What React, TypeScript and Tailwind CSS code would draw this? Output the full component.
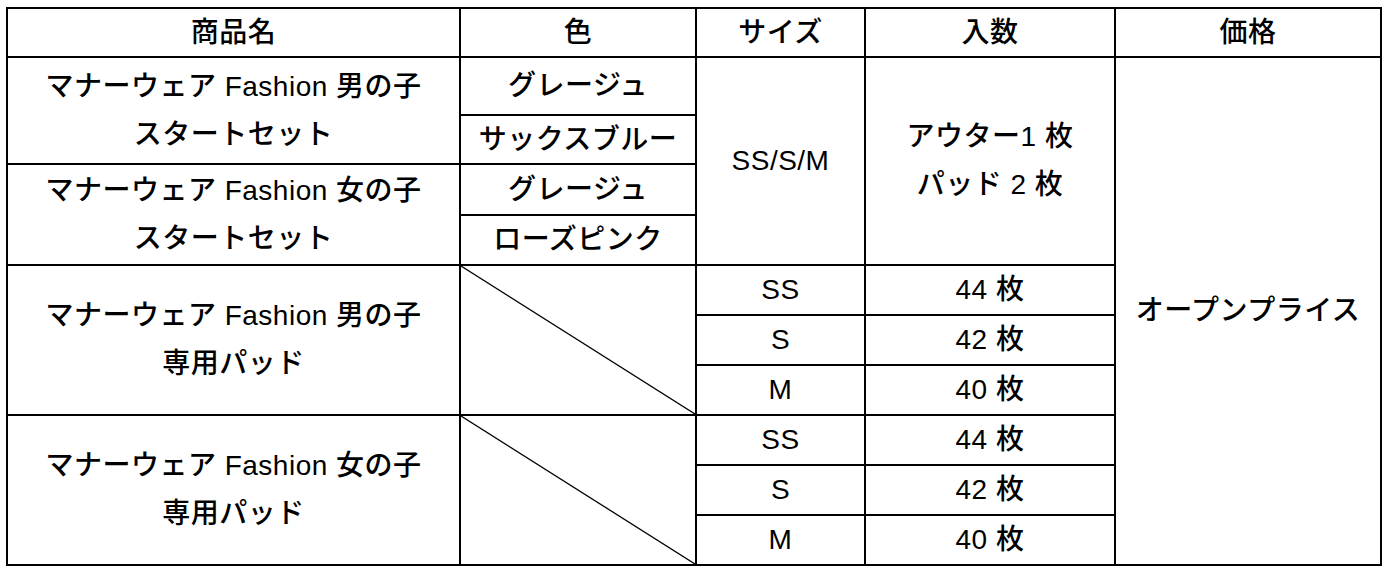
import type { ReactNode } from "react";

const font = {
  fontFamily: '"Liberation Sans", "Noto Sans CJK JP", sans-serif',
};

function Cell({
  children,
  className = "",
}: {
  children?: ReactNode;
  className?: string;
}) {
  return (
    <div
      className={
        "flex items-center justify-center bg-white text-center text-[28px] font-medium leading-[48px] tracking-[0.5px] text-black " +
        className
      }
    >
      <div>{children}</div>
    </div>
  );
}

function Slash({ className = "" }: { className?: string }) {
  return (
    <div className={"relative bg-white " + className}>
      <svg
        className="absolute inset-0 h-full w-full"
        viewBox="0 0 100 100"
        preserveAspectRatio="none"
      >
        <line
          x1="0"
          y1="0"
          x2="100"
          y2="100"
          stroke="#000"
          strokeWidth="1.3"
          vectorEffect="non-scaling-stroke"
        />
      </svg>
    </div>
  );
}

export default function App() {
  return (
    <div className="min-h-screen bg-white pl-[6px] pt-[7px]" style={font}>
      <div className="grid w-fit grid-cols-[451px_234px_167px_248px_264px] grid-rows-[47px_56px_47px_49px_48px_48px_48px_48px_48px_48px_48px] gap-[2px] bg-black p-[2px]">
        {/* header */}
        <Cell>商品名</Cell>
        <Cell>色</Cell>
        <Cell>サイズ</Cell>
        <Cell>入数</Cell>
        <Cell>価格</Cell>

        {/* product names */}
        <Cell className="col-start-1 row-span-2 row-start-2">
          マナーウェア Fashion 男の子
          <br />
          スタートセット
        </Cell>
        <Cell className="col-start-1 row-span-2 row-start-4">
          マナーウェア Fashion 女の子
          <br />
          スタートセット
        </Cell>
        <Cell className="col-start-1 row-span-3 row-start-6">
          マナーウェア Fashion 男の子
          <br />
          専用パッド
        </Cell>
        <Cell className="col-start-1 row-span-3 row-start-9">
          マナーウェア Fashion 女の子
          <br />
          専用パッド
        </Cell>

        {/* colours */}
        <Cell className="col-start-2 row-start-2">グレージュ</Cell>
        <Cell className="col-start-2 row-start-3">サックスブルー</Cell>
        <Cell className="col-start-2 row-start-4">グレージュ</Cell>
        <Cell className="col-start-2 row-start-5">ローズピンク</Cell>
        <Slash className="col-start-2 row-span-3 row-start-6" />
        <Slash className="col-start-2 row-span-3 row-start-9" />

        {/* sizes */}
        <Cell className="col-start-3 row-span-4 row-start-2">SS/S/M</Cell>
        <Cell className="col-start-3 row-start-6">SS</Cell>
        <Cell className="col-start-3 row-start-7">S</Cell>
        <Cell className="col-start-3 row-start-8">M</Cell>
        <Cell className="col-start-3 row-start-9">SS</Cell>
        <Cell className="col-start-3 row-start-10">S</Cell>
        <Cell className="col-start-3 row-start-11">M</Cell>

        {/* quantity */}
        <Cell className="col-start-4 row-span-4 row-start-2">
          アウター1 枚
          <br />
          パッド 2 枚
        </Cell>
        <Cell className="col-start-4 row-start-6">44 枚</Cell>
        <Cell className="col-start-4 row-start-7">42 枚</Cell>
        <Cell className="col-start-4 row-start-8">40 枚</Cell>
        <Cell className="col-start-4 row-start-9">44 枚</Cell>
        <Cell className="col-start-4 row-start-10">42 枚</Cell>
        <Cell className="col-start-4 row-start-11">40 枚</Cell>

        {/* price */}
        <Cell className="col-start-5 row-span-10 row-start-2">
          オープンプライス
        </Cell>
      </div>
    </div>
  );
}
